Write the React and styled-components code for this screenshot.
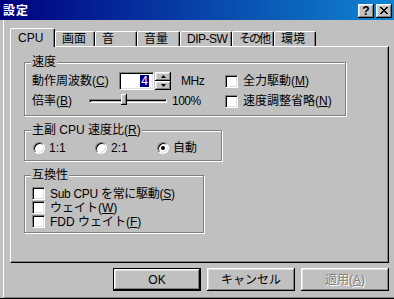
import React from 'react';
import styled, { createGlobalStyle } from 'styled-components';

const GlobalStyle = createGlobalStyle`
  html, body { margin: 0; padding: 0; background: #c0c0c0; }
  body { font-family: "Liberation Sans", "Noto Sans CJK JP", sans-serif; font-size: 12px; color: #000; }
  * { box-sizing: border-box; }
  u { text-decoration: underline; text-underline-offset: 1px; }
`;

const Window = styled.div`
  width: 394px;
  height: 299px;
  background: #c0c0c0;
  display: flex;
  flex-direction: column;
  overflow: hidden;
  border-bottom: 1px solid #000;
`;

const TitleBar = styled.div`
  height: 20px;
  flex: none;
  display: flex;
  align-items: center;
  padding: 1px 2px 0 3px;
  background: linear-gradient(to right, #000080, #1084d0);
`;

const TitleText = styled.div`
  flex: 1;
  color: #fff;
  font-weight: bold;
  font-size: 12px;
  line-height: 12px;
  letter-spacing: 1px;
`;

const TitleButton = styled.div`
  width: 16px;
  height: 14px;
  margin-left: 2px;
  background: #c0c0c0;
  display: flex;
  align-items: center;
  justify-content: center;
  box-shadow: inset -1px -1px #000, inset 1px 1px #fff, inset -2px -2px #808080, inset 2px 2px #dfdfdf;
  font-weight: bold;
  font-size: 12px;
  line-height: 12px;
`;

const Client = styled.div`
  flex: 1;
  margin-left: 3px;
  border-left: 1px solid #fff;
  border-bottom: 1px solid #808080;
  padding: 8px 5px 0 6px;
  display: flex;
  flex-direction: column;
`;

const TabStrip = styled.div`
  height: 18px;
  display: flex;
  align-items: flex-end;
  position: relative;
  z-index: 2;
`;

const Tab = styled.div`
  width: ${p => p.$w}px;
  height: ${p => (p.$active ? 19 : 15)}px;
  margin-bottom: ${p => (p.$active ? -1 : 0)}px;
  background: #c0c0c0;
  border-top: 1px solid #fff;
  border-left: 1px solid #fff;
  border-right: 1px solid #000;
  border-radius: 2px 2px 0 0;
  box-shadow: inset -1px 0 #808080;
  padding: ${p => (p.$active ? '3px 0 0 7px' : '1px 0 0 6px')};
  font-size: 12px;
  line-height: 12px;
  letter-spacing: ${p => p.$ls || 0}px;
  white-space: nowrap;
  overflow: hidden;
  position: relative;
  z-index: ${p => (p.$active ? 2 : 1)};
`;

const Panel = styled.div`
  height: 217px;
  border: 1px solid;
  border-color: #fff #000 #000 #fff;
  box-shadow: inset -1px -1px #808080;
  padding: 15px 0 0 13px;
  display: flex;
  flex-direction: column;
  align-items: flex-start;
`;

const Group = styled.div`
  position: relative;
  width: ${p => p.$w}px;
  height: ${p => p.$h}px;
  margin-top: ${p => p.$mt || 0}px;
  border: 1px solid #808080;
  box-shadow: 1px 1px 0 #fff, inset 1px 1px 0 #fff;
  padding: ${p => p.$pad};
  display: flex;
  flex-direction: column;
`;

const GroupLabel = styled.div`
  position: absolute;
  top: -7px;
  left: 6px;
  padding: 0 1px;
  background: #c0c0c0;
  font-size: 12px;
  line-height: 12px;
  white-space: nowrap;
`;

const Row = styled.div`
  display: flex;
  align-items: center;
  height: ${p => p.$h || 18}px;
  margin-top: ${p => p.$mt || 0}px;
`;

const LeftBlock = styled.div`
  width: 193px;
  display: flex;
  align-items: center;
  flex: none;
`;

const Label = styled.span`
  width: ${p => (p.$w ? `${p.$w}px` : 'auto')};
  margin-left: ${p => p.$ml || 0}px;
  flex: none;
  font-size: 12px;
  line-height: 12px;
  white-space: nowrap;
  letter-spacing: ${p => p.$ls || 0}px;
`;

const EditBox = styled.div`
  width: 35px;
  height: 18px;
  background: #fff;
  border: 1px solid;
  border-color: #808080 #fff #fff #808080;
  box-shadow: inset 1px 1px #000, inset -1px -1px #dfdfdf;
  display: flex;
  align-items: center;
  justify-content: flex-end;
  padding-right: 4px;
`;

const Selected = styled.span`
  background: #000080;
  color: #fff;
  padding: 0 1px;
  font-size: 12px;
  line-height: 12px;
`;

const Spin = styled.div`
  width: 16px;
  height: 18px;
  margin-left: 1px;
  display: flex;
  flex-direction: column;
`;

const SpinButton = styled.div`
  flex: 1;
  background: #c0c0c0;
  box-shadow: inset -1px -1px #000, inset 1px 1px #fff, inset -2px -2px #808080, inset 2px 2px #dfdfdf;
  display: flex;
  align-items: center;
  justify-content: center;
`;

const Slider = styled.div`
  position: relative;
  width: 78px;
  height: 18px;
  flex: none;
  display: flex;
  align-items: center;
`;

const Track = styled.div`
  width: 100%;
  height: 4px;
  margin-top: -1px;
  border: 1px solid;
  border-color: #808080 #fff #fff #808080;
  box-shadow: inset 1px 1px #000;
  background: #c0c0c0;
`;

const Thumb = styled.div`
  position: absolute;
  top: 2px;
  width: 6px;
  height: 11px;
  background: #c0c0c0;
  box-shadow: inset -1px -1px #000, inset 1px 1px #fff, inset -2px -2px #808080;
`;

const CheckItem = styled.div`
  display: flex;
  align-items: center;
  height: 13px;
  margin-top: ${p => p.$mt || 0}px;
`;

const CheckBox = styled.div`
  width: 13px;
  height: 13px;
  flex: none;
  background: #fff;
  border: 1px solid;
  border-color: #808080 #fff #fff #808080;
  box-shadow: inset 1px 1px #000, inset -1px -1px #dfdfdf;
  margin-right: 5px;
`;

const RadioRow = styled.div`
  display: flex;
  height: 13px;
  align-items: center;
`;

const RadioItem = styled.div`
  width: 62px;
  display: flex;
  align-items: center;
`;

const Radio = styled.div`
  width: 12px;
  height: 12px;
  flex: none;
  border-radius: 50%;
  background: #fff;
  border: 1px solid;
  border-color: #808080 #fff #fff #808080;
  box-shadow: inset 1px 1px #000, inset -1px -1px #dfdfdf;
  margin-right: 4px;
  display: flex;
  align-items: center;
  justify-content: center;
`;

const Dot = styled.div`
  width: 4px;
  height: 4px;
  border-radius: 50%;
  background: #000;
`;

const ButtonRow = styled.div`
  display: flex;
  justify-content: flex-end;
  gap: 6px;
  margin-top: 5px;
`;

const Button = styled.div`
  width: 88px;
  height: 23px;
  background: #c0c0c0;
  display: flex;
  align-items: center;
  justify-content: center;
  font-size: 12px;
  line-height: 12px;
  border: ${p => (p.$default ? '1px solid #000' : 'none')};
  box-shadow: inset -1px -1px #000, inset 1px 1px #fff, inset -2px -2px #808080, inset 2px 2px #dfdfdf;
  color: ${p => (p.$disabled ? '#808080' : '#000')};
  text-shadow: ${p => (p.$disabled ? '1px 1px 0 #fff' : 'none')};
`;

const Arrow = ({ up }) => (
  <svg width="5" height="3" viewBox="0 0 5 3">
    <polygon points={up ? '2.5,0 5,3 0,3' : '0,0 5,0 2.5,3'} fill="#000" />
  </svg>
);

const CloseIcon = () => (
  <svg width="8" height="7" viewBox="0 0 8 7" shapeRendering="crispEdges">
    <path d="M0 0h2v1h-2zM6 0h2v1h-2zM1 1h2v1h-2zM5 1h2v1h-2zM2 2h4v1h-4zM3 3h2v1h-2zM2 4h4v1h-4zM1 5h2v1h-2zM5 5h2v1h-2zM0 6h2v1h-2zM6 6h2v1h-2z" fill="#000" />
  </svg>
);

const tabs = [
  { t: 'CPU', w: 45, active: true },
  { t: '画面', w: 40 },
  { t: '音', w: 42 },
  { t: '音量', w: 43 },
  { t: 'DIP-SW', w: 52, ls: -0.5 },
  { t: 'その他', w: 42, ls: -2 },
  { t: '環境', w: 42 },
];

export default function App() {
  return (
    <>
      <GlobalStyle />
      <Window>
        <TitleBar>
          <TitleText>設定</TitleText>
          <TitleButton>?</TitleButton>
          <TitleButton><CloseIcon /></TitleButton>
        </TitleBar>
        <Client>
          <TabStrip>
            {tabs.map(tab => (
              <Tab key={tab.t} $w={tab.w} $active={tab.active} $ls={tab.ls}>{tab.t}</Tab>
            ))}
          </TabStrip>
          <Panel>
            <Group $w={322} $h={54} $pad="9px 0 0 7px">
              <GroupLabel>速度</GroupLabel>
              <Row>
                <LeftBlock>
                  <Label $w={87}>動作周波数(<u>C</u>)</Label>
                  <EditBox><Selected>4</Selected></EditBox>
                  <Spin>
                    <SpinButton><Arrow up /></SpinButton>
                    <SpinButton><Arrow /></SpinButton>
                  </Spin>
                  <Label $ml={10} $ls={-0.5}>MHz</Label>
                </LeftBlock>
                <CheckItem>
                  <CheckBox />
                  <Label>全力駆動(<u>M</u>)</Label>
                </CheckItem>
              </Row>
              <Row $mt={2}>
                <LeftBlock>
                  <Label $w={57}>倍率(<u>B</u>)</Label>
                  <Slider>
                    <Track />
                    <Thumb style={{ left: 32 }} />
                  </Slider>
                  <Label $ml={5} $ls={-0.5}>100%</Label>
                </LeftBlock>
                <CheckItem>
                  <CheckBox />
                  <Label>速度調整省略(<u>N</u>)</Label>
                </CheckItem>
              </Row>
            </Group>

            <Group $w={198} $h={31} $mt={14} $pad="10px 0 0 8px">
              <GroupLabel>主副 CPU 速度比(<u>R</u>)</GroupLabel>
              <RadioRow>
                <RadioItem><Radio /><Label>1:1</Label></RadioItem>
                <RadioItem><Radio /><Label>2:1</Label></RadioItem>
                <RadioItem><Radio><Dot /></Radio><Label>自動</Label></RadioItem>
              </RadioRow>
            </Group>

            <Group $w={180} $h={58} $mt={14} $pad="11px 0 0 7px">
              <GroupLabel>互換性</GroupLabel>
              <CheckItem><CheckBox /><Label $ls={-0.3}>Sub CPU を常に駆動(<u>S</u>)</Label></CheckItem>
              <CheckItem $mt={1}><CheckBox /><Label>ウェイト(<u>W</u>)</Label></CheckItem>
              <CheckItem $mt={1}><CheckBox /><Label>FDD ウェイト(<u>F</u>)</Label></CheckItem>
            </Group>
          </Panel>
          <ButtonRow>
            <Button $default>OK</Button>
            <Button>キャンセル</Button>
            <Button $disabled>適用(<u>A</u>)</Button>
          </ButtonRow>
        </Client>
      </Window>
    </>
  );
}
